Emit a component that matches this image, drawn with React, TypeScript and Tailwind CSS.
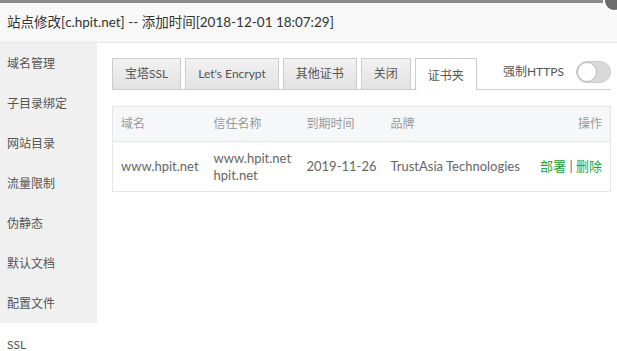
const menu = ["域名管理", "子目录绑定", "网站目录", "流量限制", "伪静态", "默认文档", "配置文件"];
const tabs = ["宝塔SSL", "Let's Encrypt", "其他证书", "关闭"];

export default function App() {
  return (
    <div
      className="w-[617px] h-[351px] overflow-hidden bg-white relative text-[#555]"
      style={{ fontFamily: 'Lato, "Noto Sans CJK SC", sans-serif' }}
    >
      <div className="h-[3px] bg-[#8c8c8c]" />
      <div className="absolute right-[-8px] top-[-10px] w-[22px] h-[22px] rounded-full bg-[#6b6b6b] border-2 border-white" />
      <div className="h-[40px] bg-[#f8f8f8] border-b border-[#e6e6e6] pl-[7px] flex items-center text-[13.5px] text-[#333]">
        站点修改[c.hpit.net] -- 添加时间[2018-12-01 18:07:29]
      </div>
      <div className="flex">
        <div className="w-[97px] shrink-0">
          <div className="bg-[#f0f0f0]">
            {menu.map((m) => (
              <div key={m} className="h-[40px] flex items-center pl-[7px] pt-[2px] text-[12px] text-[#555]">
                {m}
              </div>
            ))}
          </div>
          <div className="h-[40px] flex items-center pl-[7px] pt-[4px] text-[12px] text-[#555]">SSL</div>
        </div>
        <div className="flex-1 pl-[15px] pr-[6px] pt-[15px]">
          <div className="flex items-end border-b border-[#ccc] h-[32px]">
            {tabs.map((t) => (
              <div
                key={t}
                className="h-[31px] mr-[4px] px-[12px] flex items-center text-[12px] text-[#555] border border-b-0 border-[#ccc] bg-gradient-to-b from-[#f2f2f2] to-[#e2e2e2]"
              >
                {t}
              </div>
            ))}
            <div className="h-[32px] -mb-px px-[12px] flex items-center pt-[3px] text-[12px] text-[#555] border border-b-0 border-[#ccc] bg-white">
              证书夹
            </div>
            <div className="ml-auto self-start flex items-center h-[26px] mt-[1px]">
              <span className="text-[12px] text-[#555] mr-[12px]">强制HTTPS</span>
              <div className="w-[35px] h-[22px] rounded-full bg-[#d9d9d9] border border-[#ccc] relative">
                <div className="absolute left-0 top-0 w-[20px] h-[20px] rounded-full bg-white border border-[#bbb]" />
              </div>
            </div>
          </div>
          <table className="mt-[16px] w-full border border-[#e5e5e5] border-collapse text-[12px]">
            <thead>
              <tr className="bg-[#f6f7f9] h-[35px] text-[#999] text-left">
                <th className="font-normal pl-[8px] w-[93px]">域名</th>
                <th className="font-normal pl-[8px] w-[93px]">信任名称</th>
                <th className="font-normal pl-[8px] w-[84px]">到期时间</th>
                <th className="font-normal pl-[8px]">品牌</th>
                <th className="font-normal pr-[8px] text-right">操作</th>
              </tr>
            </thead>
            <tbody>
              <tr className="h-[50px] border-t border-[#e5e5e5] text-[#666] text-[13px]">
                <td className="pl-[8px]">www.hpit.net</td>
                <td className="pl-[8px] leading-[17px]">
                  www.hpit.net
                  <br />
                  hpit.net
                </td>
                <td className="pl-[8px]">2019-11-26</td>
                <td className="pl-[8px]">TrustAsia Technologies</td>
                <td className="pr-[8px] text-right text-[#20a53a]">
                  部署 <span className="text-[#666]">|</span> 删除
                </td>
              </tr>
            </tbody>
          </table>
        </div>
      </div>
    </div>
  );
}
